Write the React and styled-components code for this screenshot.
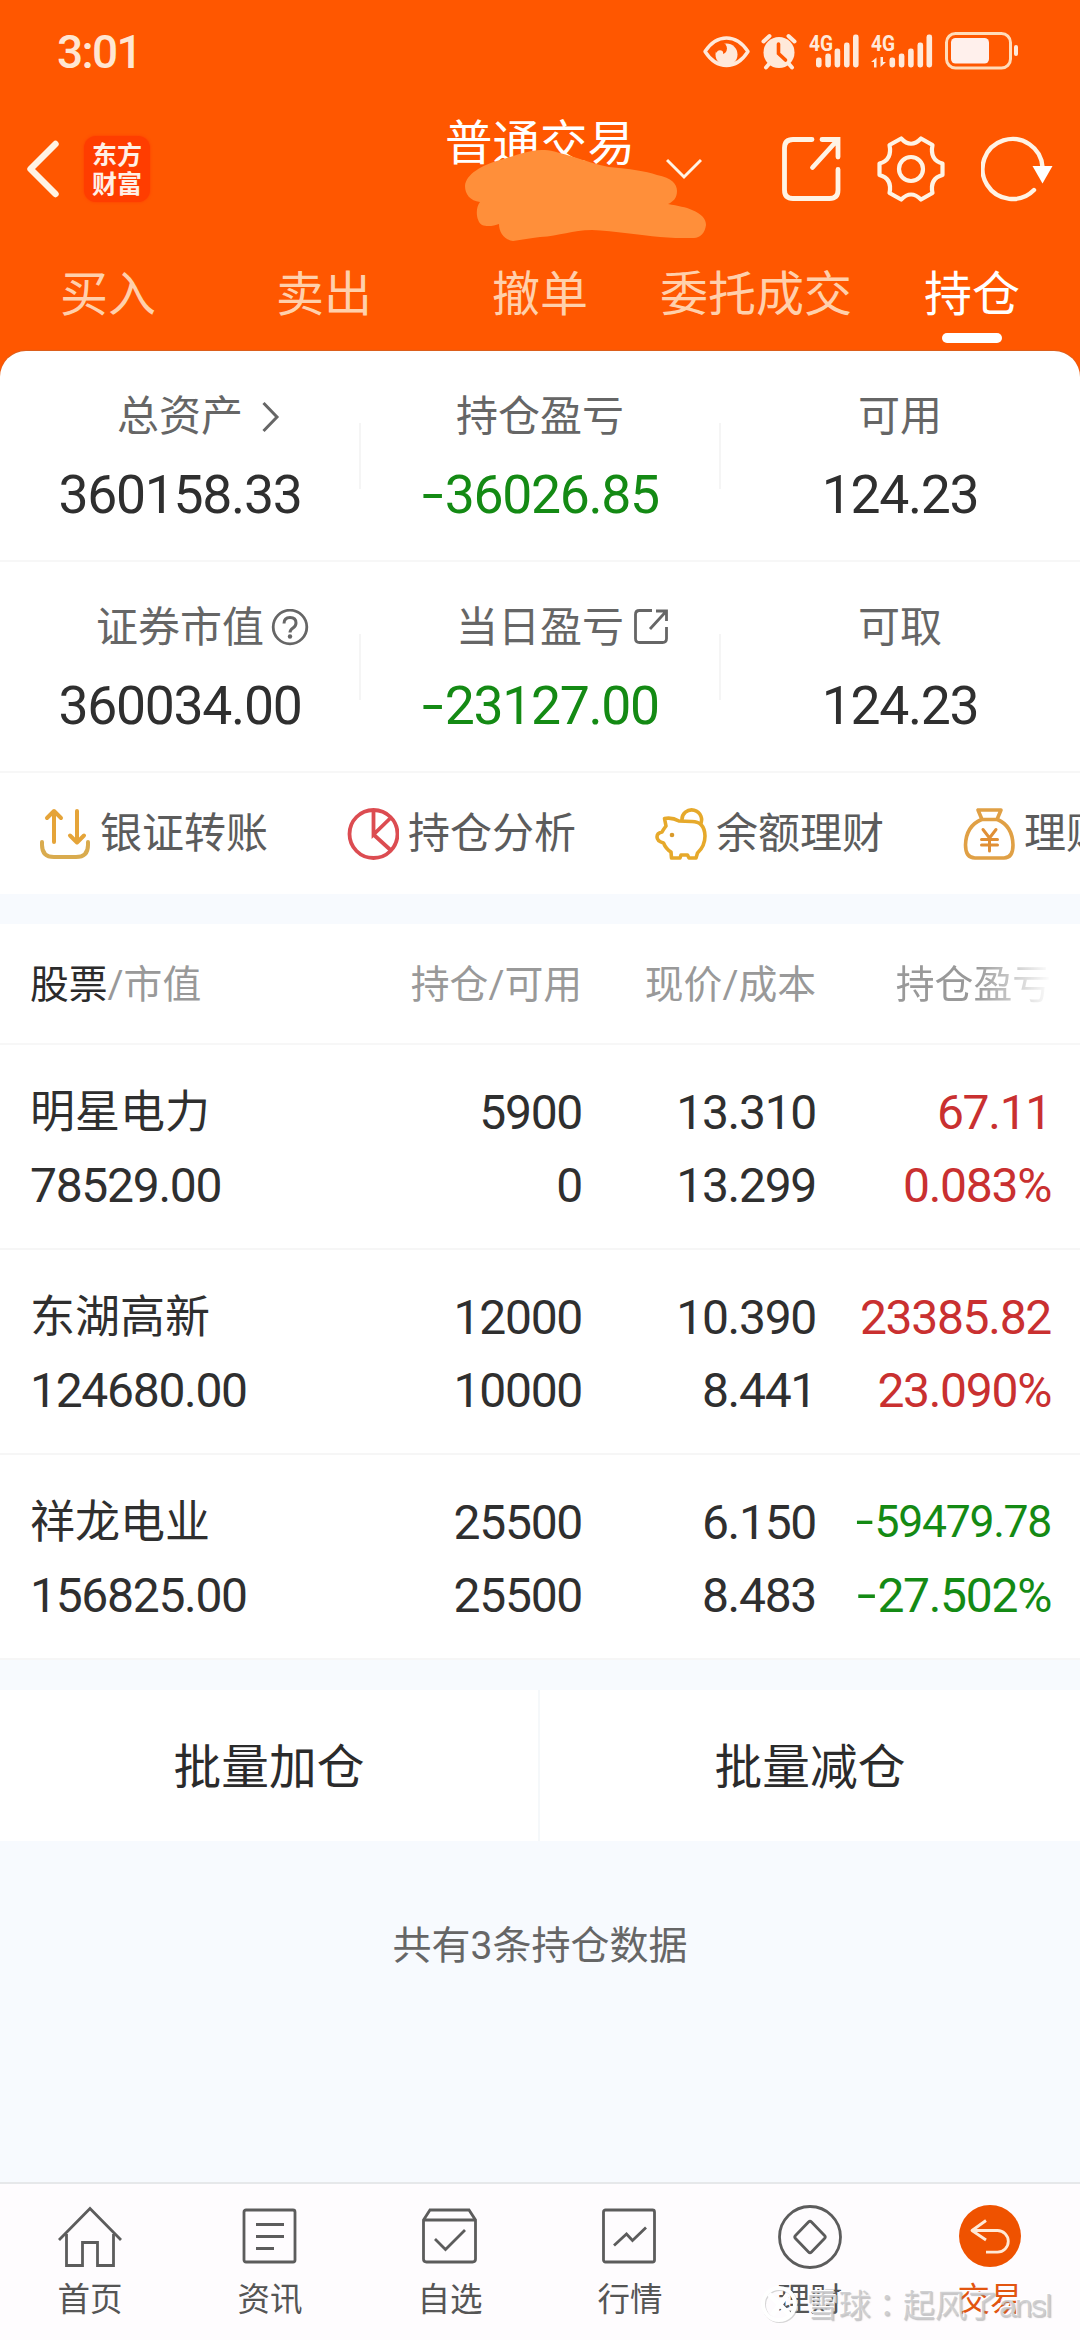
import styled, { createGlobalStyle } from 'styled-components'

const GlobalStyle = createGlobalStyle`
  * {
    box-sizing: border-box;
  }
  body {
    margin: 0;
    background: #f7fafe;
    font-family: Roboto, "Noto Sans CJK SC", sans-serif;
    color: #2f2f2f;
  }
  svg {
    display: block;
    flex: none;
  }
`

const Page = styled.div`
  display: flex;
  flex-flow: column;
  width: 1080px;
  height: 2340px;
  overflow: hidden;
  position: relative;
  background: #f7fafe;
`

const Header = styled.header`
  background: #ff5700;
  height: 375px;
  margin-bottom: -24px;
  flex: none;
  color: #fff;
`

const StatusBar = styled.div`
  display: flex;
  align-items: center;
  height: 104px;
  padding: 0 62px 0 57px;
`

const Clock = styled.div`
  flex: 1;
  font-size: 46px;
  font-weight: 500;
  letter-spacing: -1.6px;
  line-height: 106px;
  color: #ffe6d2;
`

const NavBar = styled.div`
  display: grid;
  grid-template-columns: 445px 221px 115px 1fr;
  align-items: center;
  height: 130px;
  position: relative;
`

const NavLeft = styled.div`
  display: flex;
  align-items: center;
  gap: 24px;
  padding-left: 26px;
`

const Logo = styled.div`
  width: 66px;
  height: 66px;
  border-radius: 12px;
  background: #ff3d00;
  box-shadow: 0 0 3px #ff3d00;
  font-family: "Noto Sans CJK SC", sans-serif;
  font-size: 25px;
  font-weight: 700;
  line-height: 29px;
  padding-top: 3px;
  text-align: center;
  color: #fff0e6;
`

const Title = styled.h1`
  margin: 0 0 50px;
  font-size: 47.5px;
  font-weight: 400;
  line-height: 60px;
  white-space: nowrap;
`

const Scribble = styled.svg`
  position: absolute;
  left: 460px;
  top: 42px;
`

const NavIcons = styled.div`
  display: flex;
  align-items: center;
  gap: 36px;
`

const Tabs = styled.nav`
  display: grid;
  grid-template-columns: repeat(5, 216px);
  height: 117px;
`

const Tab = styled.div`
  display: flex;
  flex-flow: column;
  align-items: center;
  padding-top: 31px;
  font-size: 48px;
  line-height: 60px;
  color: ${props => props.$active ? '#fff' : '#ffd0ac'};
  &::after {
    content: "";
    width: 60px;
    height: 10px;
    margin-top: 8px;
    border-radius: 5px;
    background: ${props => props.$active ? '#fff' : 'transparent'};
  }
`

const Card = styled.section`
  background: #fff;
  border-radius: 26px 26px 0 0;
  box-shadow: 0 -1px 1px #d9601f;
  height: 543px;
  flex: none;
`

const StatRow = styled.div`
  display: grid;
  grid-template-columns: repeat(3, 360px);
  height: 211px;
  border-bottom: 2px solid #f7f7f7;
`

const Stat = styled.div`
  display: flex;
  flex-flow: column;
  align-items: center;
  padding-top: 36px;
  position: relative;
  & + &::before {
    content: "";
    position: absolute;
    left: -1px;
    top: 72px;
    width: 2px;
    height: 66px;
    background: #f5f5f5;
  }
`

const StatLabel = styled.div`
  display: flex;
  align-items: center;
  font-size: 42px;
  line-height: 60px;
  color: #666;
`

/* keeps the label itself centred, the icon hangs off its right side */
const LabelIcon = styled.span`
  width: 0;
  overflow: visible;
`

const StatValue = styled.div`
  margin-top: 18px;
  font-size: 53.5px;
  line-height: 60px;
  letter-spacing: -1.3px;
  color: ${props => props.$down ? '#148a14' : '#2f2f2f'};
`

const Minus = styled.span`
  display: inline-block;
  width: 0.44em;
  text-align: center;
  letter-spacing: 0;
  transform: translateY(-1px) scaleX(1.45);
`

const QuickRow = styled.div`
  display: flex;
  align-items: center;
  gap: 80px;
  height: 121px;
  padding-left: 39px;
  overflow: hidden;
`

const Quick = styled.div`
  display: flex;
  align-items: center;
  flex: none;
  gap: 9px;
  width: 228px;
  white-space: nowrap;
  font-size: 42px;
  line-height: 60px;
  color: #5c5c5c;
`

const Table = styled.section`
  background: #fff;
  margin-top: 30px;
  flex: none;
`

const HeadRow = styled.div`
  display: grid;
  grid-template-columns: 302px 250px 234px 235px;
  height: 121px;
  padding: 31px 0 0 30px;
  border-bottom: 2px solid #f7f7f7;
  font-size: 38.8px;
  line-height: 60px;
  color: #999;
  text-align: right;
  b {
    font-weight: 400;
    color: #2b2b2b;
  }
  div:first-child {
    text-align: left;
  }
  div:last-child {
    -webkit-mask-image: linear-gradient(to right, #000 68%, transparent 100%);
    mask-image: linear-gradient(to right, #000 68%, transparent 100%);
  }
`

const Row = styled.div`
  display: grid;
  grid-template-columns: 302px 250px 234px 235px;
  grid-template-rows: 73px 73px;
  height: 205px;
  padding: 31px 0 0 30px;
  border-bottom: 2px solid #f6f6f6;
  font-size: 48px;
  letter-spacing: -1.3px;
  line-height: 73px;
  text-align: right;
`

const Name = styled.div`
  font-size: 45px;
  letter-spacing: 0;
  text-align: left;
`

const MarketValue = styled.div`
  text-align: left;
`

const Profit = styled.div`
  color: ${props => props.$up ? '#c93030' : '#148a14'};
  font-size: ${props => props.$long ? '44.5px' : '48px'};
`

const Batch = styled.section`
  display: grid;
  grid-template-columns: 1fr 1fr;
  height: 151px;
  margin-top: 30px;
  background: #fff;
  flex: none;
`

const BatchButton = styled.button`
  border: none;
  border-right: 2px solid #f5f8fa;
  background: none;
  padding: 0 0 5px;
  font-family: inherit;
  font-size: 47.7px;
  font-weight: 400;
  color: #2b2b2b;
  &:last-child {
    border-right: none;
  }
`

const Total = styled.p`
  flex: 1;
  margin: 0;
  padding-top: 75px;
  text-align: center;
  font-size: 39px;
  line-height: 60px;
  color: #666;
`

const TabBar = styled.footer`
  display: grid;
  grid-template-columns: repeat(6, 180px);
  height: 158px;
  flex: none;
  background: #fefcfe;
  border-top: 2px solid #e6e8ea;
`

const BarItem = styled.div`
  display: flex;
  flex-flow: column;
  align-items: center;
  padding-top: 21px;
  font-size: 32.5px;
  line-height: 40px;
  gap: 11px;
  color: ${props => props.$active ? '#e25510' : '#555'};
`

const Watermark = styled.div`
  position: absolute;
  left: 761px;
  bottom: 14px;
  display: flex;
  align-items: center;
  gap: 8px;
  font-family: "Noto Sans CJK SC", sans-serif;
  font-size: 32px;
  line-height: 40px;
  white-space: nowrap;
  color: rgba(200, 200, 202, 0.85);
  text-shadow: -1px -1px 0 #fff, 1px 1px 1px rgba(140, 140, 140, 0.5);
`

const Colon = styled.span`
  font-family: "Noto Sans CJK TC", sans-serif;
`

const Latin = styled.span`
  font-family: "Liberation Sans", sans-serif;
  letter-spacing: -1.8px;
`

function StatusIcons() {
  const bars = [[0, 10], [9.3, 14], [18.6, 19], [28, 25], [37, 33]]
  const signal = x => bars.map(([dx, h]) => (
    <rect key={dx} x={x + dx} y={67.5 - h} width="5.6" height={h} rx="2.4" />
  ))
  return (
    <svg width="316" height="44" viewBox="702 30 316 44" fill="#ffe9da">
      <path d="M705 51.500Q714 38 726.500 38T748 51.500Q739 65.500 726.500 65.500T705 51.500Z" fill="none" stroke="#ffe9da" strokeWidth="3.400" strokeLinejoin="round" />
      <circle cx="726.500" cy="54.500" r="11" />
      <circle cx="721" cy="48.500" r="6" fill="#ff5700" />
      <circle cx="720" cy="53.500" r="3.200" />
      <circle cx="779" cy="52.500" r="15.500" />
      <path d="M763.500 41.500l6-5.500M794.500 41.500l-6-5.500M769 64l-3 3.500M789 64l3 3.500" stroke="#ffe9da" strokeWidth="4" strokeLinecap="round" />
      <path d="M778.500 44v9.500l7 6.500" fill="none" stroke="#ff5700" strokeWidth="3.600" strokeLinecap="round" />
      <text x="809" y="50.500" fontSize="22" fontWeight="700" textLength="24" lengthAdjust="spacingAndGlyphs">4G</text>
      {signal(816)}
      <text x="871" y="50.500" fontSize="22" fontWeight="700" textLength="24" lengthAdjust="spacingAndGlyphs">4G</text>
      <path d="M871 62l5.500-4.500v10h-2.500v-5.500zM886 62l-5.500 5v-10h2.500v5z" />
      {signal(889.5)}
      <rect x="946.500" y="33.500" width="64" height="34.500" rx="9" fill="none" stroke="#ffdcba" strokeWidth="3" />
      <rect x="951" y="38" width="38" height="25.500" rx="4.500" fill="#fff0ec" />
      <rect x="1014" y="45" width="4" height="11" rx="2" />
    </svg>
  )
}

function BackIcon() {
  return (
    <svg width="34" height="58" viewBox="0 0 34 58" fill="none" stroke="#fff3e4" strokeWidth="6.400" strokeLinecap="round" strokeLinejoin="round">
      <path d="M29.500 4L4.500 29l25 25" />
    </svg>
  )
}

function NavShare() {
  return (
    <svg width="60" height="68" viewBox="780 135 60 68" fill="none" stroke="#fff3e4" strokeWidth="4.800" strokeLinecap="round">
      <path d="M811 139.500H792q-8.500 0-8.500 8.500v42q0 8.500 8.500 8.500h36.500q8.500 0 8.500-8.500v-20.500" />
      <path d="M811.500 167.500L836 140.500M821 139.500h16v17.500" />
    </svg>
  )
}

function GearIcon() {
  return (
    <svg width="68" height="68" viewBox="876.5 135 68 68" fill="none" stroke="#fff3e4" strokeWidth="4.200" strokeLinejoin="round">
      <path d="M900.700 138.500Q910.500 149 920.500 138.500L932 145Q929 160 942 163.500V175Q929 178.500 932 193L920.500 199.500Q910.500 189.500 900.700 199.500L889 193Q892 178.500 879 175V163.500Q892 160 889 145Z" />
      <circle cx="910.500" cy="169" r="12" />
    </svg>
  )
}

function RefreshIcon() {
  return (
    <svg width="72" height="68" viewBox="979 135 72 68" fill="none" stroke="#fff3e4" strokeWidth="4.400" strokeLinecap="round">
      <path d="M1032 190A30 30 0 1 1 1040.500 167" />
      <path d="M1030.500 166H1050.500L1040.500 183.500Z" fill="#fff" stroke="none" />
    </svg>
  )
}

function HomeIcon() {
  return (
    <>
      <path d="M1 35L32 3.500 63 35" />
      <path d="M8.500 29V60.500H24.500V37.500H39.500V60.500H55.500V29" />
    </>
  )
}

function NewsIcon() {
  return (
    <>
      <rect x="6" y="5" width="51" height="52" rx="2" />
      <path d="M18 19.500h28M18 31.500h28M18 43.500h18" />
    </>
  )
}

function PickIcon() {
  return (
    <>
      <path d="M5.500 15L12 5h39l6.500 10v39q0 3-3 3h-46q-3 0-3-3zM6 15h51" />
      <path d="M17 34l10.500 10.500L47 25" />
    </>
  )
}

function MarketIcon() {
  return (
    <>
      <rect x="5.500" y="5" width="51" height="52" rx="2" />
      <path d="M16 40.500L28.500 29l6 6.500 13.500-13" />
    </>
  )
}

function WealthIcon() {
  return (
    <>
      <circle cx="32" cy="32" r="30.500" />
      <path d="M30.500 17q1.500-1.500 3 0L46.500 30.500q1.500 1.500 0 3L33.500 47q-1.500 1.500-3 0L17.500 33.500q-1.500-1.500 0-3z" />
    </>
  )
}

function TradeIcon() {
  return (
    <>
      <circle cx="32" cy="31" r="31" fill="#ef5200" stroke="none" />
      <path d="M28 15.500L14 25.500 28 35M15 25.500H39.500a10.800 10.800 0 0 1 0 21.600H28" stroke="#ffe9d6" strokeLinejoin="round" />
    </>
  )
}

const quickIcons = {
  transfer: (
    <svg width="52" height="52" viewBox="0 0 52 52" fill="none" stroke="#e5a439" strokeWidth="4" strokeLinecap="round" strokeLinejoin="round">
      <path d="M15 34V3.500M8 10l7-7 7 7M38 3v31M31 27.500l7 7 7-7" />
      <path d="M3 34v3q0 12 12 12h22q12 0 12-12v-3" stroke="#d9ab4e" />
    </svg>
  ),
  analysis: (
    <svg width="52" height="52" viewBox="0 0 52 52" fill="none" stroke="#dc4c51" strokeWidth="3.800">
      <circle cx="26.500" cy="26" r="24" />
      <path d="M26.500 2v24.500L43 10.500M26.500 26.500L43.500 42" />
    </svg>
  ),
  piggy: (
    <svg width="52" height="52" viewBox="0 0 52 52" fill="none" stroke="#e6a92b" strokeWidth="3.600" strokeLinejoin="round">
      <path d="M24 13Q17 9 9.500 10.500L11 18Q8 22 7 24Q2 25 2 29T8.500 35Q11 41 16 44L16.500 50H25L26 47H32.500L34 50H41L42.500 45Q50 38 50 28Q49.500 13 36 13.500Z" />
      <path d="M27 12.500A9.800 9.800 0 1 1 45 17" />
      <circle cx="17" cy="27" r="2.300" fill="#d99a2b" stroke="none" />
    </svg>
  ),
  bag: (
    <svg width="52" height="52" viewBox="0 0 52 52" fill="none" stroke="#e0a045" strokeWidth="3.600" strokeLinecap="round" strokeLinejoin="round">
      <path d="M15 2H38L34 11.500H19Z" />
      <path d="M18.500 11.500Q3 18 2.500 37Q2.500 50 12 50H41Q50 50 50 37Q49.500 18 34.500 11.500" />
      <path d="M20 21.500L26.500 30 33 21.500M26.500 30V43M18.500 31.500H34.500M18.500 37H34.500" stroke="#e08f35" strokeWidth="3" />
    </svg>
  ),
}

const quickLinks = [
  ['transfer', '银证转账'],
  ['analysis', '持仓分析'],
  ['piggy', '余额理财'],
  ['bag', '理财'],
]

const holdings = [
  { name: '明星电力', value: '78529.00', held: '5900', free: '0', price: '13.310', cost: '13.299', profit: '67.11', rate: '0.083%', up: true },
  { name: '东湖高新', value: '124680.00', held: '12000', free: '10000', price: '10.390', cost: '8.441', profit: '23385.82', rate: '23.090%', up: true },
  { name: '祥龙电业', value: '156825.00', held: '25500', free: '25500', price: '6.150', cost: '8.483', profit: '-59479.78', rate: '-27.502%', up: false },
]

const barItems = [
  ['首页', HomeIcon],
  ['资讯', NewsIcon],
  ['自选', PickIcon],
  ['行情', MarketIcon],
  ['理财', WealthIcon],
  ['交易', TradeIcon],
]

function Signed({ value }) {
  return value[0] == '-' ? <><Minus>-</Minus>{value.slice(1)}</> : value
}

export default function App() {
  return (
    <Page>
      <GlobalStyle />
      <Header>
        <StatusBar>
          <Clock>3:01</Clock>
          <StatusIcons />
        </StatusBar>
        <NavBar>
          <NavLeft>
            <BackIcon />
            <Logo>东方<br />财富</Logo>
          </NavLeft>
          <Title>普通交易</Title>
          <svg width="36" height="22" viewBox="0 0 36 22" fill="none" stroke="#fff3e4" strokeWidth="3">
            <path d="M1 2l17 17L35 2" />
          </svg>
          <NavIcons>
            <NavShare />
            <GearIcon />
            <RefreshIcon />
          </NavIcons>
          <Scribble width="250" height="100" viewBox="460 146 250 100">
            <path fill="#ff8f3a" d="M465 186C466 174 482 165 500 160C518 155 530 149 545 150C560 151 585 162 609 167C630 169 645 171 657 175C672 178 677 184 677 191C677 198 673 202 668 204C678 206 686 207 692 210C702 214 706 219 706 225C705 233 700 238 694 238C680 238 670 238 660 237C640 235 615 231 592 230C572 230 560 236 540 237C530 238 522 240 513 241C504 240 499 232 499 224C494 226 487 227 482 225C476 221 475 208 480 202C470 201 465 194 465 186Z" />
          </Scribble>
        </NavBar>
        <Tabs>
          <Tab>买入</Tab>
          <Tab>卖出</Tab>
          <Tab>撤单</Tab>
          <Tab>委托成交</Tab>
          <Tab $active>持仓</Tab>
        </Tabs>
      </Header>

      <Card>
        <StatRow>
          <Stat>
            <StatLabel>
              总资产
              <LabelIcon>
                <svg width="40" height="36" viewBox="0 0 40 36" fill="none" stroke="#666" strokeWidth="3">
                  <path d="M20.500 4l13.500 14-13.500 14" />
                </svg>
              </LabelIcon>
            </StatLabel>
            <StatValue>360158.33</StatValue>
          </Stat>
          <Stat>
            <StatLabel>持仓盈亏</StatLabel>
            <StatValue $down><Signed value="-36026.85" /></StatValue>
          </Stat>
          <Stat>
            <StatLabel>可用</StatLabel>
            <StatValue>124.23</StatValue>
          </Stat>
        </StatRow>
        <StatRow>
          <Stat>
            <StatLabel>
              证券市值
              <LabelIcon>
                <svg width="48" height="38" viewBox="0 0 48 38" fill="none" stroke="#666" strokeWidth="2.800">
                  <circle cx="26" cy="18" r="16.800" />
                  <path d="M20 14.500q0-6 6-6t6 5.500q0 3-3 5t-3 4.500" strokeWidth="3" />
                  <circle cx="26" cy="27.500" r="2.200" fill="#666" stroke="none" />
                </svg>
              </LabelIcon>
            </StatLabel>
            <StatValue>360034.00</StatValue>
          </Stat>
          <Stat>
            <StatLabel>
              当日盈亏
              <LabelIcon>
                <svg width="48" height="38" viewBox="0 0 48 38" fill="none" stroke="#666" strokeWidth="2.800">
                  <path d="M28 1.500H15.500q-4 0-4 4v24q0 4 4 4h23q4 0 4-4V18" />
                  <path d="M26 20L42 2.500M32 2h10.500v10" />
                </svg>
              </LabelIcon>
            </StatLabel>
            <StatValue $down><Signed value="-23127.00" /></StatValue>
          </Stat>
          <Stat>
            <StatLabel>可取</StatLabel>
            <StatValue>124.23</StatValue>
          </Stat>
        </StatRow>
        <QuickRow>
          {quickLinks.map(([icon, text]) => (
            <Quick key={icon}>{quickIcons[icon]}{text}</Quick>
          ))}
        </QuickRow>
      </Card>

      <Table>
        <HeadRow>
          <div><b>股票</b>/市值</div>
          <div>持仓/可用</div>
          <div>现价/成本</div>
          <div>持仓盈亏</div>
        </HeadRow>
        {holdings.map(item => (
          <Row key={item.name}>
            <Name>{item.name}</Name>
            <div>{item.held}</div>
            <div>{item.price}</div>
            <Profit $up={item.up} $long={item.profit.length > 8}><Signed value={item.profit} /></Profit>
            <MarketValue>{item.value}</MarketValue>
            <div>{item.free}</div>
            <div>{item.cost}</div>
            <Profit $up={item.up}><Signed value={item.rate} /></Profit>
          </Row>
        ))}
      </Table>

      <Batch>
        <BatchButton>批量加仓</BatchButton>
        <BatchButton>批量减仓</BatchButton>
      </Batch>
      <Total>共有3条持仓数据</Total>

      <TabBar>
        {barItems.map(([text, Icon]) => (
          <BarItem key={text} $active={text == '交易'}>
            <svg width="64" height="64" viewBox="0 0 64 64" fill="none" stroke="#5c5c5c" strokeWidth="2.800">
              <Icon />
            </svg>
            {text}
          </BarItem>
        ))}
      </TabBar>

      <Watermark>
        <svg width="38" height="40" viewBox="0 0 38 40" fill="none">
          <circle cx="19" cy="20" r="16" stroke="#bbb" strokeWidth="4" opacity="0.6" />
          <circle cx="18" cy="19" r="16" stroke="#fff" strokeWidth="4" />
          <path d="M8 9l20 20M27 9L11 30" stroke="#fff" strokeWidth="5" />
        </svg>
        <div>雪球<Colon>：</Colon>起风了<Latin>ansl</Latin></div>
      </Watermark>
    </Page>
  )
}
